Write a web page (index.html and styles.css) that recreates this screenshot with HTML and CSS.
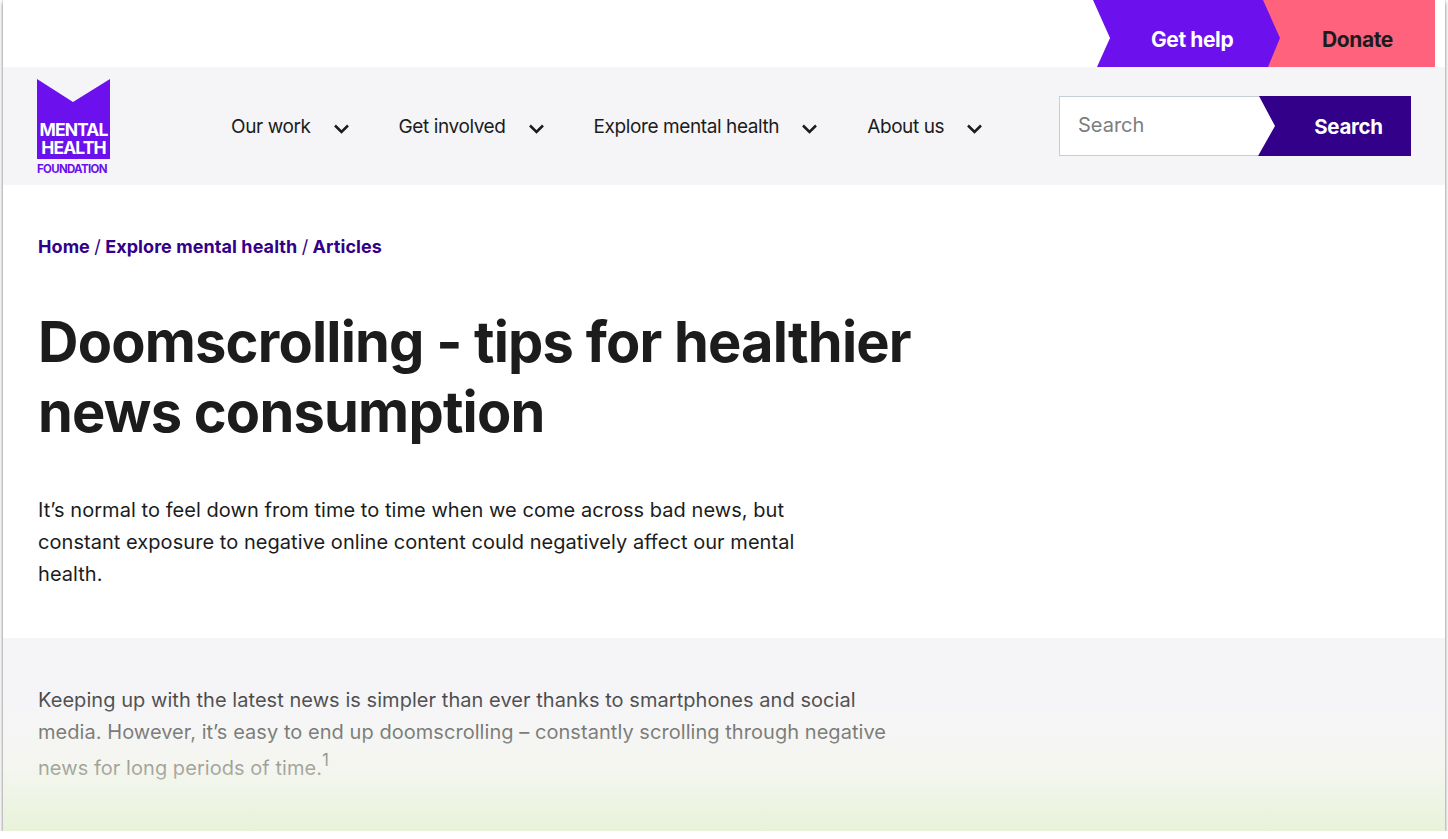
FILE: index.html
```html
<!DOCTYPE html>
<html>
<head>
    <title>Doomscrolling - tips for healthier news consumption</title>
    <link rel="stylesheet" href="styles.css">
</head>
<body>
    <div class="page">
        <div class="top-bar">
            <a class="tab tab-help">Get help</a>
            <a class="tab tab-donate">Donate</a>
        </div>

        <header class="main-nav">
            <div class="logo">
                <div class="logo-mark">
                    <span>MENTAL</span>
                    <span>HEALTH</span>
                </div>
                <div class="logo-sub">FOUNDATION</div>
            </div>
            <nav class="nav-links">
                <a class="nav-item">Our work
                    <svg class="chev" viewBox="0 0 16 10"><path d="M1.5 1.5L8 8l6.5-6.5"/></svg>
                </a>
                <a class="nav-item">Get involved
                    <svg class="chev" viewBox="0 0 16 10"><path d="M1.5 1.5L8 8l6.5-6.5"/></svg>
                </a>
                <a class="nav-item">Explore mental health
                    <svg class="chev" viewBox="0 0 16 10"><path d="M1.5 1.5L8 8l6.5-6.5"/></svg>
                </a>
                <a class="nav-item">About us
                    <svg class="chev" viewBox="0 0 16 10"><path d="M1.5 1.5L8 8l6.5-6.5"/></svg>
                </a>
            </nav>
            <form class="search">
                <input class="search-input" type="text" placeholder="Search">
                <button class="search-btn" type="button">Search</button>
            </form>
        </header>

        <section class="intro">
            <div class="crumbs">
                <a>Home</a> <span>/</span> <a>Explore mental health</a> <span>/</span> <a>Articles</a>
            </div>
            <h1>Doomscrolling - tips for healthier news consumption</h1>
            <p class="lede">It’s normal to feel down from time to time when we come across bad news, but constant exposure to negative online content could negatively affect our mental health.</p>
        </section>

        <section class="article">
            <p>Keeping up with the latest news is simpler than ever thanks to smartphones and social media. However, it’s easy to end up doomscrolling – constantly scrolling through negative news for long periods of time.<sup>1</sup></p>
            <div class="fade"></div>
        </section>
    </div>
</body>
</html>
```

FILE: styles.css
```css
* { box-sizing: border-box; }

body {
    margin: 0;
    background: #fff;
    font-family: Inter, "Liberation Sans", sans-serif;
    color: #1c1c1c;
}

.page {
    width: 1442px;
    height: 831px;
    margin-left: 3px;
    background: #fff;
    overflow: hidden;
    box-shadow: 0 3px 4px rgba(0,0,0,0.4), 0 0 3px rgba(0,0,0,0.25);
}

/* top strip */
.top-bar {
    height: 67px;
    display: flex;
    justify-content: flex-end;
    padding-right: 10px;
}
.tab {
    height: 67px;
    display: flex;
    align-items: center;
    font-size: 21px;
    font-weight: 700;
    letter-spacing: -0.4px;
    padding-top: 12px;
}
.tab-help {
    width: 187px;
    margin-right: -17px;
    padding-left: 58px;
    color: #fff;
    background: #6c10ee;
    position: relative;
    z-index: 1;
    clip-path: polygon(0 0, 170px 0, 187px 38px, 175px 67px, 4px 67px, 17px 38px);
}
.tab-donate {
    width: 172px;
    padding-left: 59px;
    background: #fe627c;
}

/* nav band */
.main-nav {
    height: 118px;
    background: #f5f5f8;
    display: flex;
    padding: 12px 34px 0;
}
.logo { width: 73px; }
.logo-mark {
    height: 80px;
    background: #6c10ee;
    clip-path: polygon(0 0, 36px 23px, 73px 0, 73px 80px, 0 80px);
    color: #fff;
    font-size: 17.5px;
    font-weight: 700;
    line-height: 18px;
    letter-spacing: -0.9px;
    text-align: center;
    display: flex;
    flex-direction: column;
    justify-content: flex-end;
    padding-bottom: 2px;
}
.logo-sub {
    margin-top: 3px;
    color: #6c10ee;
    font-size: 11.5px;
    font-weight: 700;
    letter-spacing: -0.7px;
    white-space: nowrap;
}

.nav-links {
    display: flex;
    gap: 49px;
    margin-left: 121px;
    height: 94px;
    align-items: center;
}
.nav-item {
    display: flex;
    align-items: center;
    gap: 22px;
    font-size: 19px;
    letter-spacing: -0.4px;
    white-space: nowrap;
}
.chev {
    width: 17px;
    height: 10px;
    margin-top: 6px;
    fill: none;
    stroke: #1c1c1c;
    stroke-width: 2.5;
}

.search {
    display: flex;
    width: 352px;
    height: 60px;
    margin: 17px 0 0 auto;
    position: relative;
}
.search-input {
    width: 220px;
    height: 60px;
    padding: 0 0 2px 18px;
    border: 1px solid #c3ced6;
    border-right: 0;
    background: #fff;
    font: 20px Inter, "Liberation Sans", sans-serif;
    outline: none;
}
.search-input::placeholder { color: #7d7d7d; }
.search-btn {
    position: absolute;
    right: 0;
    top: 0;
    width: 153px;
    height: 60px;
    padding: 0 0 0 28px;
    border: 0;
    background: #33008a;
    color: #fff;
    font: 700 20.5px Inter, "Liberation Sans", sans-serif;
    letter-spacing: -0.3px;
    clip-path: polygon(1px 0, 100% 0, 100% 100%, 0 100%, 17px 30px);
}

/* heading area */
.intro {
    height: 453px;
    padding: 50px 35px 0;
}
.crumbs {
    font-size: 18px;
    line-height: 24px;
    font-weight: 700;
    letter-spacing: 0.07px;
    color: #33008a;
}
.crumbs span { font-weight: 400; }
h1 {
    width: 920px;
    margin: 48px 0 0;
    font-size: 56px;
    line-height: 70px;
    font-weight: 700;
    letter-spacing: -0.8px;
}
.lede {
    width: 790px;
    margin: 47px 0 0;
    font-size: 20px;
    line-height: 32px;
    letter-spacing: 0.05px;
}

/* article, faded out at the bottom */
.article {
    height: 193px;
    background: #f5f5f8;
    padding: 46px 35px 0;
    position: relative;
}
.article p {
    width: 855px;
    margin: 0;
    font-size: 20px;
    line-height: 32px;
    letter-spacing: 0.05px;
    color: #222;
}
.article sup {
    font-size: 17px;
    line-height: 24px;
    vertical-align: 9px;
}
.fade {
    position: absolute;
    left: 0;
    right: 0;
    bottom: 0;
    height: 155px;
    background: linear-gradient(to bottom,
        rgba(245,245,248,0) 0%,
        rgba(245,245,248,0.22) 16%,
        rgba(246,247,240,0.42) 36%,
        rgba(243,246,233,0.62) 60%,
        rgba(236,244,224,0.8) 80%,
        #e8f2d9 100%);
}
```
